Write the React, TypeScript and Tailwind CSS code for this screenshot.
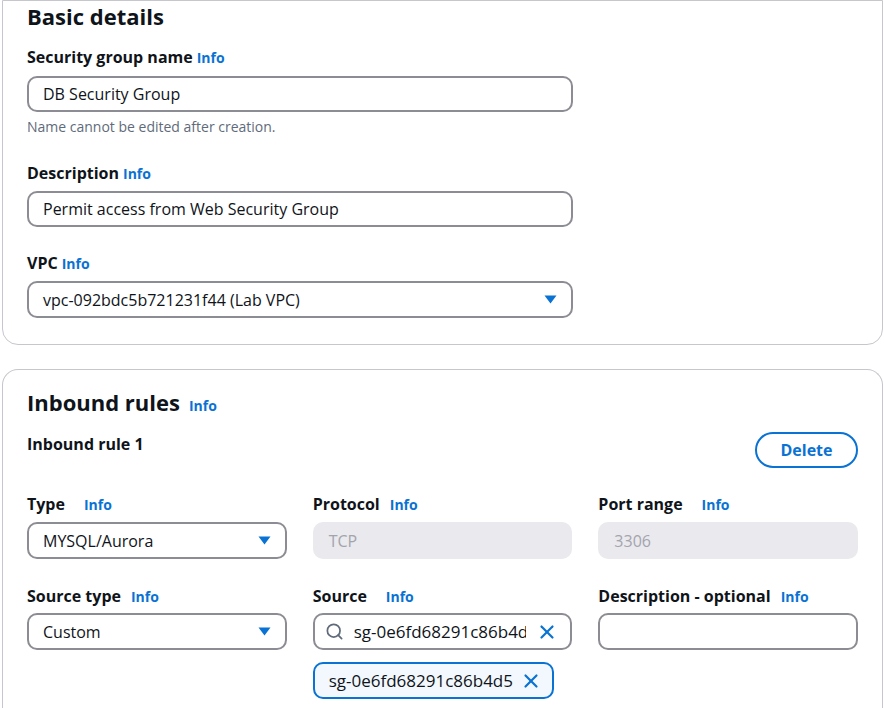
import { Search, X } from "lucide-react";

function Info({ className = "" }: { className?: string }) {
    return <span className={`text-[14px] font-bold text-[#0972d3] ${className}`}>Info</span>;
}

function Caret() {
    return (
        <svg width="13" height="9" viewBox="0 0 13 9" className="shrink-0">
            <path d="M0.5 0.5 H12.5 L6.5 8.5 Z" fill="#0972d3" />
        </svg>
    );
}

function TextBox({ value }: { value: string }) {
    return (
        <div className="h-[36px] w-[546px] rounded-[10px] border-2 border-[#8c8c94] px-[14px] flex items-center text-[16px]">
            {value}
        </div>
    );
}

function Select({ value, wide }: { value: string; wide?: boolean }) {
    return (
        <div
            className={`rounded-[10px] border-2 border-[#8c8c94] pl-[14px] pr-[14px] flex items-center justify-between text-[16px] ${
                wide ? "w-[546px] h-[37px]" : "w-full h-[37px]"
            }`}
        >
            <span>{value}</span>
            <Caret />
        </div>
    );
}

function FieldLabel({ text }: { text: string }) {
    return (
        <div className="flex items-baseline gap-[4px] h-[22px] leading-[22px]">
            <span className="text-[16px] font-bold">{text}</span>
            <Info />
        </div>
    );
}

function RuleLabel({ text, gap }: { text: string; gap: string }) {
    return (
        <div className="flex items-baseline h-[22px] leading-[22px]">
            <span className="text-[16px] font-bold">{text}</span>
            <Info className={gap} />
        </div>
    );
}

export default function App() {
    return (
        <div className="min-h-screen bg-white text-[#0f141a] font-['Open_Sans',sans-serif]">
            {/* Basic details */}
            <section className="ml-[2px] mr-[1px] border border-[#c6c6cd] rounded-b-[16px] pl-[24px] pr-[25px] pt-[1px] pb-[26px]">
                <h2 className="text-[22px] font-bold leading-[28px]">Basic details</h2>

                <div className="mt-[16px]">
                    <FieldLabel text="Security group name" />
                </div>
                <div className="mt-[8px]">
                    <TextBox value="DB Security Group" />
                </div>
                <p className="mt-[6px] text-[14px] leading-[18px] text-[#5f6b7a]">Name cannot be edited after creation.</p>

                <div className="mt-[26px]">
                    <FieldLabel text="Description" />
                </div>
                <div className="mt-[7px]">
                    <TextBox value="Permit access from Web Security Group" />
                </div>

                <div className="mt-[25px]">
                    <FieldLabel text="VPC" />
                </div>
                <div className="mt-[7px]">
                    <Select value="vpc-092bdc5b721231f44 (Lab VPC)" wide />
                </div>
            </section>

            {/* Inbound rules */}
            <section className="mt-[24px] ml-[2px] mr-[1px] border border-[#c6c6cd] rounded-t-[16px] border-b-0 pl-[24px] pr-[24px] pt-[18px] pb-[20px]">
                <div className="flex items-baseline gap-[9px] leading-[28px]">
                    <h2 className="text-[22px] font-bold">Inbound rules</h2>
                    <Info />
                </div>

                <div className="mt-[12px] flex items-start justify-between">
                    <span className="text-[16px] font-bold leading-[22px] mt-[1px]">Inbound rule 1</span>
                    <button className="h-[36px] w-[103px] rounded-full border-2 border-[#0972d3] text-[16px] font-bold text-[#0972d3]">
                        Delete
                    </button>
                </div>

                <div className="mt-[25px] grid grid-cols-3 gap-x-[26px]">
                    <div>
                        <RuleLabel text="Type" gap="ml-[19px]" />
                        <div className="mt-[7px]">
                            <Select value="MYSQL/Aurora" />
                        </div>
                    </div>
                    <div>
                        <RuleLabel text="Protocol" gap="ml-[10px]" />
                        <div className="mt-[7px] h-[37px] rounded-[10px] bg-[#e9e9ee] px-[16px] flex items-center text-[16px] text-[#a4a4ad]">
                            TCP
                        </div>
                    </div>
                    <div>
                        <RuleLabel text="Port range" gap="ml-[19px]" />
                        <div className="mt-[7px] h-[37px] rounded-[10px] bg-[#e9e9ee] px-[16px] flex items-center text-[16px] text-[#a4a4ad]">
                            3306
                        </div>
                    </div>
                </div>

                <div className="mt-[26px] grid grid-cols-3 gap-x-[26px]">
                    <div>
                        <RuleLabel text="Source type" gap="ml-[10px]" />
                        <div className="mt-[6px]">
                            <Select value="Custom" />
                        </div>
                    </div>
                    <div>
                        <RuleLabel text="Source" gap="ml-[19px]" />
                        <div className="mt-[6px] h-[37px] rounded-[10px] border-2 border-[#8c8c94] pl-[10px] pr-[12px] flex items-center gap-[10px] text-[17px]">
                            <Search size={19} strokeWidth={2.2} className="shrink-0 text-[#5f6b7a]" />
                            <span className="flex-1 overflow-hidden whitespace-nowrap">sg-0e6fd68291c86b4d5</span>
                            <X size={22} strokeWidth={2.4} className="shrink-0 text-[#0972d3]" />
                        </div>
                        <div className="mt-[12px] h-[37px] w-[241px] rounded-[10px] border-2 border-[#0972d3] bg-[#f2f8fd] pl-[14px] pr-[10px] flex items-center justify-between text-[17px]">
                            <span>sg-0e6fd68291c86b4d5</span>
                            <X size={22} strokeWidth={2.4} className="shrink-0 text-[#0972d3]" />
                        </div>
                    </div>
                    <div>
                        <RuleLabel text="Description - optional" gap="ml-[10px]" />
                        <div className="mt-[6px] h-[37px] rounded-[10px] border-2 border-[#8c8c94]" />
                    </div>
                </div>
            </section>
        </div>
    );
}
